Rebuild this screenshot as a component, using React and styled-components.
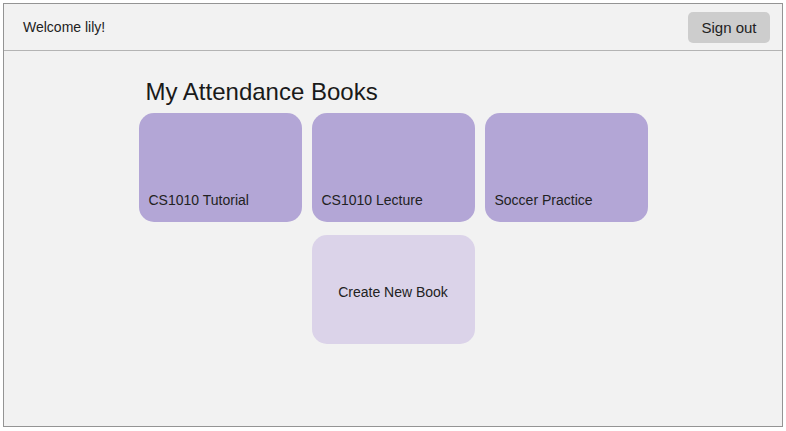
import React from "react";
import styled, { createGlobalStyle } from "styled-components";

const Global = createGlobalStyle`
  html, body { margin: 0; padding: 0; background: #ffffff; }
  body { font-family: "Liberation Sans", Arial, sans-serif; color: #222; }
`;

const Frame = styled.div`
  box-sizing: border-box;
  margin: 3px;
  width: 780px;
  height: 424px;
  border: 1px solid #949494;
  background: #f2f2f2;
  display: flex;
  flex-direction: column;
`;

const Header = styled.header`
  height: 46px;
  border-bottom: 1px solid #b4b4b4;
  display: flex;
  align-items: center;
  justify-content: space-between;
  padding: 0 12px 0 19px;
`;

const Welcome = styled.span`
  font-size: 14px;
  color: #222;
`;

const SignOut = styled.button`
  width: 82px;
  height: 31px;
  border: none;
  border-radius: 5px;
  background: #cdcdcd;
  color: #222;
  font-family: "Liberation Sans", Arial, sans-serif;
  font-size: 15px;
  padding: 0;
  cursor: pointer;
`;

const Main = styled.main`
  flex: 1;
  display: flex;
  justify-content: center;
  padding-top: 27px;
`;

const Shelf = styled.section`
  width: 509px;
  display: flex;
  flex-direction: column;
  gap: 7px;
`;

const Title = styled.h1`
  margin: 0;
  padding-left: 7px;
  font-size: 24px;
  font-weight: 400;
  color: #1a1a1a;
`;

const Grid = styled.div`
  display: grid;
  grid-template-columns: repeat(3, 163px);
  grid-auto-rows: 109px;
  column-gap: 10px;
  row-gap: 13px;
`;

const Card = styled.div`
  box-sizing: border-box;
  border-radius: 15px;
  background: ${(p) => (p.$create ? "#dbd3e9" : "#b3a6d6")};
  display: flex;
  align-items: ${(p) => (p.$create ? "center" : "flex-end")};
  justify-content: ${(p) => (p.$create ? "center" : "flex-start")};
  padding: ${(p) => (p.$create ? "4px 0 0 0" : "0 10px 14px 10px")};
  grid-column: ${(p) => (p.$create ? "2" : "auto")};
  font-size: 14px;
  color: #222;
  cursor: pointer;
`;

const books = ["CS1010 Tutorial", "CS1010 Lecture", "Soccer Practice"];

export default function App() {
  return (
    <>
      <Global />
      <Frame>
        <Header>
          <Welcome>Welcome lily!</Welcome>
          <SignOut>Sign out</SignOut>
        </Header>
        <Main>
          <Shelf>
            <Title>My Attendance Books</Title>
            <Grid>
              {books.map((b) => (
                <Card key={b}>{b}</Card>
              ))}
              <Card $create>Create New Book</Card>
            </Grid>
          </Shelf>
        </Main>
      </Frame>
    </>
  );
}
